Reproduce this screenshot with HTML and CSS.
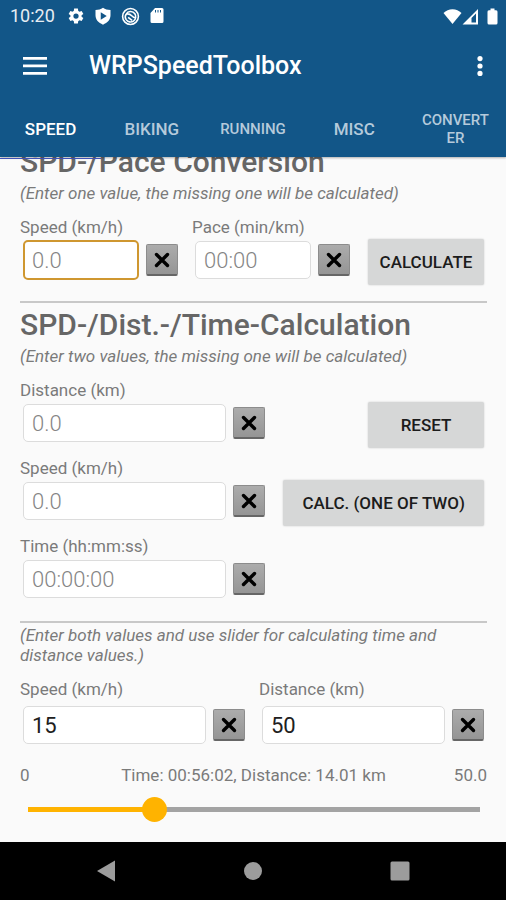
FILE: index.html
```html
<!DOCTYPE html>
<html lang="en">
<head>
<meta charset="utf-8">
<meta name="viewport" content="width=device-width, initial-scale=1">
<title>WRPSpeedToolbox</title>
<link rel="stylesheet" href="styles.css">
</head>
<body>
<svg class="defs" aria-hidden="true">
  <symbol id="cross" viewBox="0 0 16 16"><path d="M2.500 2.500 L13.500 13.500 M13.500 2.500 L2.500 13.500" fill="none" stroke="#000" stroke-width="3.400" stroke-linecap="round"/></symbol>
</svg>
<header class="app-header">
  <div class="status">
    <span class="clock">10:20</span>
    <div class="status-left">
      <svg width="18" height="18" viewBox="0 0 24 24"><path fill="#fff" fill-rule="evenodd" d="M19.4 13c.1-.3.1-.7.1-1s0-.7-.1-1l2.4-1.800-2.300-4-2.800 1.100c-.6-.4-1.100-.8-1.700-1L14.500 2h-5L9 5.300c-.6.200-1.200.6-1.700 1L4.500 5.200l-2.300 4L4.600 11c-.1.300-.1.700-.1 1s0 .7.100 1l-2.400 1.800 2.300 4 2.800-1.100c.5.400 1.100.8 1.700 1l.5 3.300h5l.5-3.300c.6-.2 1.200-.6 1.700-1l2.800 1.100 2.300-4zM12 15.500a3.500 3.500 0 1 1 0-7 3.500 3.500 0 0 1 0 7z"/></svg>
      <svg width="18" height="18" viewBox="0 0 24 24"><path fill="#fff" fill-rule="evenodd" d="M12 1C9 3 6 4 2 4v7c0 6 4 10 10 12.500C18 21 22 17 22 11V4c-4 0-7-1-10-3zM9 7l8 5-8 5z"/></svg>
      <svg width="19" height="19" viewBox="0 0 24 24"><g fill="none" stroke="#fff" stroke-width="2"><circle cx="12" cy="12" r="10"/><path d="M6.500 9a6.500 6.500 0 0 1 11-.500 6.500 6.500 0 0 1-11 7.500 6.500 6.500 0 0 1 0-7zM6.500 9c3-1 5 0 7 2s3 3 5 2.500M9 13l5 4"/></g></svg>
      <svg width="16" height="18" viewBox="0 0 16 18"><path fill="#fff" fill-rule="evenodd" d="M6 1h7a1.500 1.500 0 0 1 1.500 1.500v12A1.500 1.500 0 0 1 13 16H3a1.500 1.500 0 0 1-1.500-1.500V6zM6 3v2.500h1V3zM8.500 3v2.500h1V3zM11 3v2.500h1V3z"/></svg>
    </div>
    <div class="status-right">
      <svg width="19" height="17" viewBox="0 0 19 17"><path fill="#fff" d="M9.500 16 .5 5C3 2.500 6 1.200 9.500 1.200S16 2.500 18.500 5z"/></svg>
      <svg width="17" height="17" viewBox="0 0 17 17"><path fill="#fff" fill-rule="evenodd" d="M.5 16.500 16 1v15.500zM9.500 10v4.500h4.500V5.500z"/></svg>
      <svg class="battery" width="11" height="17" viewBox="0 0 11 17"><path fill="#fff" d="M3.500.5h4v1.800H9A1.500 1.500 0 0 1 10.500 4v11A1.500 1.500 0 0 1 9 16.500H2A1.500 1.500 0 0 1 .5 15V4A1.500 1.500 0 0 1 2 2.300h1.500z"/></svg>
    </div>
  </div>
  <div class="toolbar">
    <button class="icon-button" type="button" aria-label="Open menu"><svg width="24" height="18" viewBox="0 0 24 18"><path fill="#fff" d="M0 0h24v2.700H0zM0 7.500h24v2.700H0zM0 15h24v2.700H0z"/></svg></button>
    <h1 class="title">WRPSpeedToolbox</h1>
    <button class="icon-button" type="button" aria-label="More options"><svg width="6" height="20" viewBox="0 0 6 20"><g fill="#fff"><circle cx="3" cy="2.600" r="2.600"/><circle cx="3" cy="10" r="2.600"/><circle cx="3" cy="17.400" r="2.600"/></g></svg></button>
  </div>
  <nav class="tabs">
    <a class="tab active" href="#speed">SPEED</a>
    <a class="tab" href="#biking">BIKING</a>
    <a class="tab small" href="#running">RUNNING</a>
    <a class="tab" href="#misc">MISC</a>
    <a class="tab small split" href="#converter">CONVERT<wbr>ER</a>
  </nav>
</header>

<main class="content">
  <section class="section conversion">
    <h2 class="heading">SPD-/Pace Conversion</h2>
    <p class="hint">(Enter one value, the missing one will be calculated)</p>
    <div class="conversion-row">
      <div class="field">
        <label class="label" for="c-speed">Speed (km/h)</label>
        <div class="entry"><input class="box focused" id="c-speed" type="text" placeholder="0.0"><button class="clear" type="button" aria-label="Clear speed"><svg width="16" height="16"><use href="#cross"/></svg></button></div>
      </div>
      <div class="field">
        <label class="label" for="c-pace">Pace (min/km)</label>
        <div class="entry"><input class="box" id="c-pace" type="text" placeholder="00:00"><button class="clear" type="button" aria-label="Clear pace"><svg width="16" height="16"><use href="#cross"/></svg></button></div>
      </div>
      <button class="action" type="button">CALCULATE</button>
    </div>
  </section>

  <section class="section calculation">
    <h2 class="heading">SPD-/Dist.-/Time-Calculation</h2>
    <p class="hint">(Enter two values, the missing one will be calculated)</p>
    <div class="rows">
      <div class="row">
        <div class="field wide">
          <label class="label" for="d-dist">Distance (km)</label>
          <div class="entry"><input class="box" id="d-dist" type="text" placeholder="0.0"><button class="clear" type="button" aria-label="Clear distance"><svg width="16" height="16"><use href="#cross"/></svg></button></div>
        </div>
        <button class="action" type="button">RESET</button>
      </div>
      <div class="row">
        <div class="field wide">
          <label class="label" for="d-speed">Speed (km/h)</label>
          <div class="entry"><input class="box" id="d-speed" type="text" placeholder="0.0"><button class="clear" type="button" aria-label="Clear speed"><svg width="16" height="16"><use href="#cross"/></svg></button></div>
        </div>
        <button class="action long" type="button">CALC. (ONE OF TWO)</button>
      </div>
      <div class="row">
        <div class="field wide">
          <label class="label" for="d-time">Time (hh:mm:ss)</label>
          <div class="entry"><input class="box" id="d-time" type="text" placeholder="00:00:00"><button class="clear" type="button" aria-label="Clear time"><svg width="16" height="16"><use href="#cross"/></svg></button></div>
        </div>
      </div>
    </div>
  </section>

  <section class="section">
    <p class="hint">(Enter both values and use slider for calculating time and distance values.)</p>
    <div class="pair">
      <div class="field">
        <label class="label" for="s-speed">Speed (km/h)</label>
        <div class="entry"><input class="box" id="s-speed" type="text" value="15"><button class="clear" type="button" aria-label="Clear speed"><svg width="16" height="16"><use href="#cross"/></svg></button></div>
      </div>
      <div class="field">
        <label class="label" for="s-dist">Distance (km)</label>
        <div class="entry"><input class="box" id="s-dist" type="text" value="50"><button class="clear" type="button" aria-label="Clear distance"><svg width="16" height="16"><use href="#cross"/></svg></button></div>
      </div>
    </div>
    <div class="scale"><span>0</span><label for="slider">Time: 00:56:02, Distance: 14.01 km</label><span class="scale-end">50.0</span></div>
    <input class="slider" id="slider" type="range" min="0" max="50" step="0.01" value="14.01">
  </section>
</main>

<footer class="system-nav">
  <button type="button" aria-label="Back"><svg width="20" height="22" viewBox="0 0 20 22"><path fill="#9c9c9c" d="M1 11 19 .500v21z"/></svg></button>
  <button type="button" aria-label="Home"><svg width="20" height="20" viewBox="0 0 20 20"><circle cx="10" cy="10" r="9" fill="#9c9c9c"/></svg></button>
  <button type="button" aria-label="Recent apps"><svg width="20" height="20" viewBox="0 0 20 20"><rect x=".5" y=".5" width="19" height="19" rx="1.500" fill="#9c9c9c"/></svg></button>
</footer>
</body>
</html>
```
FILE: styles.css
```css
* { box-sizing: border-box; }

body {
  margin: 0;
  min-height: 100vh;
  display: flex;
  flex-direction: column;
  background: #fafafa;
  color: #7a7a7a;
  font-family: Roboto, "Liberation Sans", sans-serif;
  font-size: 17px;
  line-height: 20px;
}

button, input { font: inherit; margin: 0; }
h1, h2, p { margin: 0; }
svg { display: block; }
.defs { position: absolute; width: 0; height: 0; }

.app-header {
  background: #125688;
  color: #fff;
  box-shadow: 0 1px 2px rgba(0, 0, 0, 0.3);
  z-index: 1;
}

.status {
  display: flex;
  align-items: center;
  height: 32px;
  padding: 0 8px 0 10px;
}
.clock { font-size: 18px; color: #e6edf3; }
.status-left { display: flex; align-items: center; gap: 9px; margin-left: 12px; }
.status-right { display: flex; align-items: center; margin-left: auto; }
.battery { margin-left: 8px; }

.toolbar {
  display: flex;
  align-items: center;
  height: 68px;
  padding: 0 16px;
}
.icon-button {
  display: flex;
  justify-content: center;
  padding: 7px;
  border: 0;
  background: none;
}
.title {
  flex: 1;
  margin-left: 35px;
  font-size: 25px;
  font-weight: 500;
  line-height: 30px;
}

.tabs {
  display: grid;
  grid-template-columns: repeat(5, minmax(0, 1fr));
  height: 57px;
}
.tab {
  padding: 19px 0;
  color: #b5cadb;
  font-weight: 500;
  text-align: center;
  text-decoration: none;
}
.tab.active { color: #fff; border-bottom: 1px solid #3f51b5; }
.tab.small { font-size: 15px; }
.tab.split { padding: 11px 12px; line-height: 18px; }

.content {
  flex: 1;
  overflow: hidden;
  padding: 0 19px 0 20px;
}
.section + .section { border-top: 2px solid #c8c8c8; padding-top: 2px; }
.section.conversion { margin-top: -12px; padding-bottom: 16px; }
.section.calculation { padding-top: 5px; padding-bottom: 17px; }

.heading {
  margin-bottom: 4px;
  font-size: 30px;
  font-weight: 500;
  line-height: 34px;
  color: #666;
}
.hint { font-style: italic; }

.field { min-width: 0; }
.label { display: block; }
.entry {
  display: flex;
  align-items: center;
  gap: 7px;
  height: 48px;
  padding: 0 0 2px 3px;
}

.box {
  flex: 1;
  min-width: 0;
  width: 100%;
  height: 38px;
  padding: 0 8px;
  border: 1px solid #dcdcdc;
  border-radius: 5px;
  background: #fff;
  color: #202020;
  font-size: 22px;
}
.box::placeholder { color: #858585; font-weight: 300; opacity: 1; }
.box.focused { height: 40px; border: 2px solid #cf9730; padding: 0 7px; }

.clear {
  flex: none;
  display: grid;
  place-items: center;
  width: 32px;
  height: 32px;
  padding: 0;
  border: 1px solid #8c8c8c;
  border-bottom: 2px solid #666;
  border-radius: 2px;
  background: linear-gradient(#acacac, #959595);
}

.action {
  min-width: 116px;
  height: 46px;
  padding: 0 10px;
  border: 0;
  border-radius: 2px;
  background: #d6d7d7;
  color: #1c1c1c;
  font-weight: 500;
  box-shadow: 0 0 2px rgba(0, 0, 0, 0.2);
}
.action.long { padding: 0 19px; }

.conversion-row {
  display: grid;
  grid-template-columns: 1fr 1fr auto;
  align-items: end;
  column-gap: 14px;
  margin-top: 14px;
  padding-right: 3px;
}
.conversion-row .action { margin-left: 4px; }

.rows { display: grid; gap: 10px; margin-top: 14px; }
.row {
  display: flex;
  justify-content: space-between;
  align-items: end;
  padding-right: 3px;
}
.wide { flex: 0 0 245px; }

.pair {
  display: grid;
  grid-template-columns: 1fr 1fr;
  gap: 14px;
  margin-top: 14px;
  padding-right: 3px;
}
.pair .label { margin-bottom: 3px; }

.scale {
  display: grid;
  grid-template-columns: 1fr auto 1fr;
  margin-top: 15px;
}
.scale-end { text-align: right; }

.slider {
  appearance: none;
  display: block;
  width: calc(100% + 10px);
  height: 25px;
  margin: 12px -5px 8px;
  background: linear-gradient(90deg, #ffb300 28%, #a3a3a3 28%) center / calc(100% - 25px) 5px no-repeat;
}
.slider::-webkit-slider-thumb {
  appearance: none;
  width: 25px;
  height: 25px;
  border-radius: 50%;
  background: #ffb300;
}

.system-nav {
  display: flex;
  justify-content: space-around;
  align-items: center;
  height: 58px;
  padding: 0 33px;
  background: #000;
}
.system-nav button { padding: 8px; border: 0; background: none; }
```
